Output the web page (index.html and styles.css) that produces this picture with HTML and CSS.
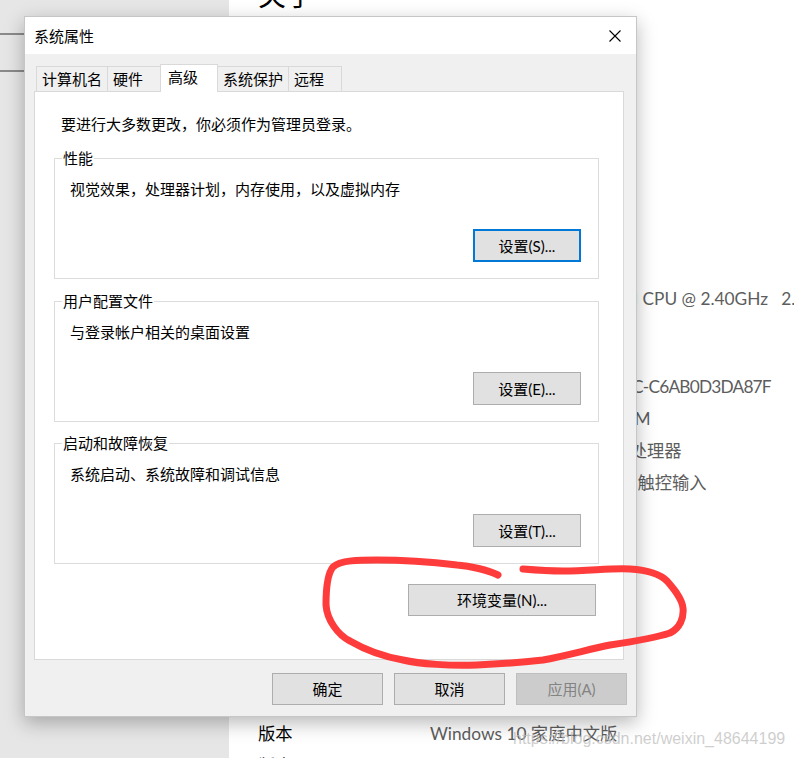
FILE: index.html
```html
<!DOCTYPE html>
<html lang="zh-CN">
<head>
    <meta charset="UTF-8">
    <meta name="viewport" content="width=device-width, initial-scale=1.0">
    <title>系统属性</title>
    <link rel="stylesheet" href="styles.css">
</head>
<body>
    <div class="settings">
        <aside class="sidebar">
            <div class="side-line"></div>
            <div class="side-line"></div>
        </aside>
        <main class="about">
            <h1>关于</h1>
            <div class="specs first">
                <div class="spec-row"><span class="spec-label">设备名称</span><span class="spec-value">DESKTOP-8QJ3KLM</span></div>
                <div class="spec-row"><span class="spec-label">处理器</span><span class="spec-value">Intel(R) Core(TM) i5-9300H CPU @ 2.40GHz&nbsp;&nbsp;&nbsp;2.40 GHz</span></div>
                <div class="spec-row spaced"><span class="spec-label">机带 RAM</span><span class="spec-value">8.00 GB (7.85 GB 可用)</span></div>
                <div class="spec-row"><span class="spec-label">设备 ID</span><span class="spec-value device-id">A1B2C3D4-E5F6-47A8-9B0C-C6AB0D3DA87F</span></div>
                <div class="spec-row"><span class="spec-label">产品 ID</span><span class="spec-value product-id">00342-35836-61420-AAOEM</span></div>
                <div class="spec-row"><span class="spec-label">系统类型</span><span class="spec-value">64 位操作系统,基于x64 的处理器</span></div>
                <div class="spec-row"><span class="spec-label">笔和触控</span><span class="spec-value">没有可用于此显示器的笔或触控输入</span></div>
            </div>
            <h2 class="section-title">Windows 规格</h2>
            <div class="specs">
                <div class="spec-row"><span class="spec-label">版本</span><span class="spec-value">Windows 10 家庭中文版</span></div>
                <div class="spec-row"><span class="spec-label">版本号</span><span class="spec-value">20H2</span></div>
            </div>
        </main>
    </div>

    <div class="watermark">https://blog.csdn.net/weixin_48644199</div>

    <!-- 系统属性 dialog -->
    <div class="dialog">
        <div class="titlebar">
            <span class="title">系统属性</span>
            <svg class="close" width="12" height="12" viewBox="0 0 12 12">
                <path d="M0.5 0.5 L11.5 11.5 M11.5 0.5 L0.5 11.5" stroke="#000" stroke-width="1.1" fill="none"/>
            </svg>
        </div>

        <div class="dialog-body">
            <div class="tabs">
                <div class="tab">计算机名</div>
                <div class="tab">硬件</div>
                <div class="tab active">高级</div>
                <div class="tab">系统保护</div>
                <div class="tab">远程</div>
            </div>

            <div class="panel">
                <p class="notice">要进行大多数更改，你必须作为管理员登录。</p>

                <fieldset class="group">
                    <legend>性能</legend>
                    <p class="group-desc">视觉效果，处理器计划，内存使用，以及虚拟内存</p>
                    <div class="group-actions">
                        <button class="btn btn-set focused">设置(S)...</button>
                    </div>
                </fieldset>

                <fieldset class="group">
                    <legend>用户配置文件</legend>
                    <p class="group-desc">与登录帐户相关的桌面设置</p>
                    <div class="group-actions">
                        <button class="btn btn-set">设置(E)...</button>
                    </div>
                </fieldset>

                <fieldset class="group">
                    <legend>启动和故障恢复</legend>
                    <p class="group-desc">系统启动、系统故障和调试信息</p>
                    <div class="group-actions">
                        <button class="btn btn-set">设置(T)...</button>
                    </div>
                </fieldset>

                <div class="env-row">
                    <button class="btn btn-env">环境变量(N)...</button>
                </div>
            </div>
        </div>

        <div class="footer">
            <button class="btn btn-foot">确定</button>
            <button class="btn btn-foot">取消</button>
            <button class="btn btn-foot" disabled>应用(A)</button>
        </div>
    </div>

    <!-- red hand-drawn mark -->
    <svg class="scribble" width="794" height="758" viewBox="0 0 794 758">
        <path d="M498,575 C488,570 470,566 457,565 C440,563 410,560 377,560 C360,560 340,560 333,567 C327,574 326,590 326,605 C327,620 338,635 350,641 C362,648 380,656 403,660 C420,664 450,666 477,665 C500,664 525,662 543,660 C565,656 590,649 610,645 C630,642 655,638 670,633 C680,628 684,618 683,608 C682,598 673,588 667,581 C660,574 645,570 630,569 C610,568 590,571 563,571 C550,571 535,570 523,569"
              fill="none" stroke="#ff3c3c" stroke-width="7" stroke-linecap="round" stroke-linejoin="round"/>
    </svg>
</body>
</html>
```

FILE: styles.css
```css
body {
    margin: 0;
    width: 794px;
    height: 758px;
    overflow: hidden;
    position: relative;
    font-family: "Lato", "Noto Sans CJK SC", sans-serif;
    background: #fff;
}

/* settings page behind the dialog */
.settings {
    display: flex;
    height: 758px;
}
.sidebar {
    width: 229px;
    flex-shrink: 0;
    background: #e6e6e6;
    padding-top: 33px;
    box-sizing: border-box;
}
.side-line {
    width: 60px;
    height: 2px;
    background: #8a8a8a;
    margin-bottom: 35px;
}
.about {
    flex: 1;
    padding-left: 29px;
    white-space: nowrap;
    overflow: hidden;
}
.about h1 {
    margin: -19px 0 0;
    font-size: 28px;
    line-height: 28px;
    font-weight: normal;
    color: #000;
}
.specs.first {
    margin-top: 242px;
}
.spec-row {
    display: flex;
    line-height: 32px;
    font-size: 17.3px;
}
.spec-row.spaced {
    margin-bottom: 24px;
}
.spec-label {
    width: 172px;
    flex-shrink: 0;
    color: #000;
}
.spec-value {
    color: #5d5d5d;
}
.spec-value.device-id {
    letter-spacing: -0.8px;
}
.spec-value.product-id {
    letter-spacing: -0.55px;
}
.section-title {
    margin: 150px 0 39px;
    font-size: 22px;
    line-height: 30px;
    font-weight: normal;
}
.watermark {
    position: absolute;
    left: 513px;
    top: 729px;
    font-family: "Liberation Sans", sans-serif;
    font-size: 16px;
    line-height: 20px;
    color: rgba(190, 190, 190, 0.75);
}

/* dialog */
.dialog {
    position: absolute;
    left: 24px;
    top: 16px;
    width: 613px;
    height: 701px;
    box-sizing: border-box;
    background: #f0f0f0;
    border: 1px solid #c6c6c6;
    box-shadow: 0 6px 18px rgba(0, 0, 0, 0.28);
    font-size: 15px;
    color: #000;
}
.titlebar {
    height: 37px;
    background: #fff;
    display: flex;
    align-items: center;
    justify-content: space-between;
    padding: 0 15px 0 9px;
    line-height: 20px;
}
.close {
    display: block;
}
.dialog-body {
    padding: 10px 12px 0 9px;
}
.tabs {
    display: flex;
    align-items: flex-end;
    height: 27px;
    padding-left: 2px;
    position: relative;
    z-index: 1;
}
.tab {
    box-sizing: border-box;
    height: 25px;
    min-width: 54px;
    padding: 2px 5px 0;
    margin-left: -1px;
    border: 1px solid #d9d9d9;
    border-bottom: none;
    background: #f0f0f0;
    line-height: 20px;
}
.tab:first-child {
    margin-left: 0;
}
.tab.active {
    height: 28px;
    min-width: 58px;
    padding-left: 7px;
    margin-bottom: -1px;
    background: #fff;
    position: relative;
    z-index: 2;
}
.panel {
    box-sizing: border-box;
    height: 569px;
    background: #fff;
    border: 1px solid #d9d9d9;
    overflow: hidden;
}
.notice {
    margin: 22px 0 0 26px;
    line-height: 20px;
}
.group {
    margin: 12px 24px 0 19px;
    padding: 0 17px 16px 7px;
    border: 1px solid #dcdcdc;
    min-width: 0;
}
.group:first-of-type {
    margin-top: 14px;
}
.group:last-of-type {
    margin-top: 11px;
}
.group legend {
    padding: 0 1px;
    line-height: 20px;
}
.group-desc {
    margin: 11px 0 0 8px;
    line-height: 20px;
}
.group-actions {
    display: flex;
    justify-content: flex-end;
    margin-top: 30px;
}
.env-row {
    display: flex;
    justify-content: flex-end;
    margin: 20px 27px 0 0;
}
.footer {
    display: flex;
    justify-content: flex-end;
    gap: 11px;
    padding: 13px 9px 0 0;
}

/* buttons */
.btn {
    box-sizing: border-box;
    height: 32px;
    padding: 0;
    background: #e1e1e1;
    border: 1px solid #adadad;
    border-radius: 0;
    font: inherit;
    line-height: 20px;
    color: #000;
}
.btn.focused {
    border: 2px solid #0078d7;
}
.btn:disabled {
    background: #cccccc;
    border-color: #bfbfbf;
    color: #838383;
}
.btn-set {
    width: 108px;
    height: 33px;
}
.btn-env {
    width: 188px;
}
.btn-foot {
    width: 111px;
}

.scribble {
    position: absolute;
    left: 0;
    top: 0;
    pointer-events: none;
}
```
